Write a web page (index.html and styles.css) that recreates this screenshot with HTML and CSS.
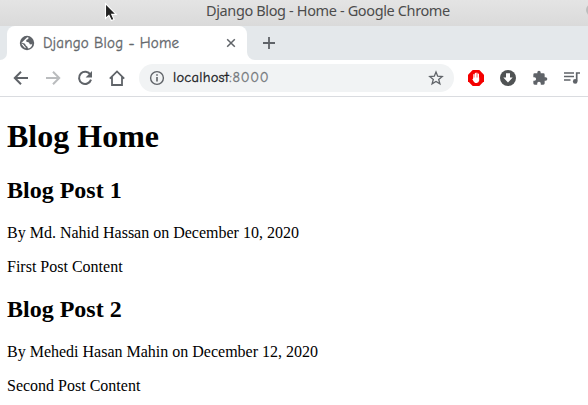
FILE: index.html
```html
<!DOCTYPE html>
<html lang="en">
<head>
<meta charset="utf-8">
<title>Django Blog - Home</title>
<link rel="stylesheet" href="styles.css">
</head>
<body>
<header class="titlebar"><span class="window-title">Django Blog - Home - Google Chrome</span><span class="window-button"></span></header>
<div class="tabstrip">
  <div class="tab-edge"></div>
  <div class="tab">
    <svg class="globe" width="16" height="16" viewBox="0 0 16 16"><circle cx="8" cy="8" r="7.2" fill="#5f6368"/><path d="M8.2 2.2 9.6 2.6 9.2 4 7.2 5 7.4 6.8 10 7.4 10.8 9.2 12.4 9.6 13.3 8.6 12.8 11 11 13 9 13.4 8.4 11.7 6.8 10.5 6 8.8 2.6 7.6 2.8 9.4 5.4 12.6 6.8 13.2 6.5 11.9 5.2 10.8 4.9 9.9 2.3 8Z" fill="#fff"/></svg>
    <span class="tab-title">Django Blog - Home</span>
    <svg class="close" width="10" height="10" viewBox="0 0 10 10"><path d="m1.2 1.2 7.6 7.6m0-7.6-7.6 7.6" fill="none" stroke="#5f6368" stroke-width="1.5"/></svg>
  </div>
  <div class="strip-rest"><svg width="12" height="12" viewBox="0 0 12 12"><path d="M6 0v12M0 6h12" stroke="#5f6368" stroke-width="1.8"/></svg></div>
</div>
<nav class="toolbar">
  <svg class="nav-icon" width="16" height="16" viewBox="0 0 16 16"><path d="M15 8H2.5M8 1.8 1.8 8 8 14.2" fill="none" stroke="#5f6368" stroke-width="2"/></svg>
  <svg class="nav-icon" width="16" height="16" viewBox="0 0 16 16"><path d="M1 8h12.5M8 1.8 14.2 8 8 14.2" fill="none" stroke="#babcbe" stroke-width="2"/></svg>
  <svg class="nav-icon" width="16" height="16" viewBox="0 0 16 16"><path d="M13.4 4.7A6.1 6.1 0 1 0 14 9.6" fill="none" stroke="#5f6368" stroke-width="2"/><path d="M15 1v6.4H8.6Z" fill="#5f6368"/></svg>
  <svg class="nav-icon" width="16" height="16" viewBox="0 0 16 16"><path d="M3 7v8h10V7M.8 8.6 8 1.4l7.2 7.2" fill="none" stroke="#5f6368" stroke-width="1.8"/></svg>
  <div class="omnibox">
    <svg width="16" height="16" viewBox="0 0 16 16"><circle cx="8" cy="8" r="6.4" fill="none" stroke="#5f6368" stroke-width="1.4"/><path d="M8 7v4.5M8 4.2v1.6" stroke="#5f6368" stroke-width="1.6"/></svg>
    <span class="url"><span class="host">localhost</span><span class="port">:8000</span></span>
    <svg class="star" width="16" height="16" viewBox="0 0 16 16"><path d="m8 2 1.7 4.2 4.5.3-3.5 2.9 1.2 4.4L8 11.4l-3.9 2.4 1.2-4.4-3.5-2.9 4.5-.3Z" fill="none" stroke="#5f6368" stroke-width="1.3"/></svg>
  </div>
  <div class="extensions">
    <svg width="16" height="16" viewBox="0 0 16 16"><path d="M4.7 0h6.6L16 4.7v6.6L11.3 16H4.7L0 11.3V4.7Z" fill="#f40000"/><path d="M5.9 8.5V4.6M7.4 7.5V3.3M8.9 7.5V3.1M10.4 9V4.2" stroke="#fff" stroke-width="1.2" stroke-linecap="round"/><path d="M5.4 7.4h5.8v3.1Q10.7 12.8 8.7 13H7.3Q5.8 12.2 4.3 9.2l.9-.5Z" fill="#fff"/></svg>
    <svg width="16" height="16" viewBox="0 0 16 16"><circle cx="8" cy="8" r="8" fill="#505354"/><path d="M6 3.3h4v4.2h2.7L8 12.4 3.3 7.5H6Z" fill="#fff"/></svg>
    <svg width="16" height="16" viewBox="0 0 24 24"><path d="M20.5 11H19V7a2 2 0 0 0-2-2h-4V3.5a2.5 2.5 0 0 0-5 0V5H4a2 2 0 0 0-2 2v3.8h1.5a2.7 2.7 0 0 1 0 5.4H2V20a2 2 0 0 0 2 2h3.8v-1.5a2.7 2.7 0 0 1 5.4 0V22H17a2 2 0 0 0 2-2v-4h1.5a2.5 2.5 0 0 0 0-5Z" fill="#5f6368"/></svg>
    <svg width="16" height="16" viewBox="0 0 16 16"><path d="M0 3h10M0 6.5h10M0 10h6.5M12.7 11V3h3.3" fill="none" stroke="#5f6368" stroke-width="1.7"/><circle cx="11.2" cy="11.4" r="2.3" fill="#5f6368"/></svg>
  </div>
</nav>
<main class="page">
  <h1>Blog Home</h1>
  <article><h2>Blog Post 1</h2><p>By Md. Nahid Hassan on December 10, 2020</p><p>First Post Content</p></article>
  <article><h2>Blog Post 2</h2><p>By Mehedi Hasan Mahin on December 12, 2020</p><p>Second Post Content</p></article>
</main>
<svg class="pointer" width="14" height="21" viewBox="0 0 14 21"><path d="M1.5 1.5v15l3.4-3.1 2.4 5.2 2.7-1.2-2.3-5h4.5Z" fill="#222" stroke="#fff" stroke-width="1.1"/></svg>
</body>
</html>
```
FILE: styles.css
```css
* { box-sizing: border-box; }
body { margin: 0; height: 405px; overflow: hidden; background: #fff; color: #000; font: 16px "Liberation Serif", serif; }
svg { display: block; flex: none; }
.titlebar { height: 26px; display: flex; justify-content: flex-end; align-items: center; padding-bottom: 6px; background: linear-gradient(#e4e4e4, #dadada); overflow: hidden; color: #4c4c4c; font: 14.5px/20px "Noto Sans", sans-serif; }
.window-title { flex: none; width: 382px; margin-right: -2px; white-space: nowrap; letter-spacing: -.37px; }
.window-button { width: 12px; height: 12px; margin-right: -10px; flex: none; border-radius: 50%; background: #bcbcbc; }
.tabstrip { height: 34px; display: flex; background: #fff; }
.tab-edge { width: 7px; background: #e4e8eb; border-bottom-right-radius: 7px; }
.tab { width: 240px; display: flex; align-items: center; padding: 0 11px 0 12px; background: linear-gradient(#e4e8eb 50%, #fff 50%); position: relative; z-index: 0; }
.tab::before { content: ""; position: absolute; inset: 0; z-index: -1; background: #fff; border-radius: 8px 8px 0 0; }
.tab-title { margin-left: 8px; white-space: nowrap; letter-spacing: .17px; color: #64686c; -webkit-text-stroke: .3px; font: 15px/20px "Comic Neue", "Noto Sans", sans-serif; }
.close { margin-left: auto; }
.strip-rest { flex: 1; display: flex; align-items: center; padding-left: 16px; background: #e4e8eb; border-bottom-left-radius: 8px; }
.toolbar { height: 37px; display: flex; align-items: center; padding: 0 8px 0 13px; border-bottom: 1px solid #dadce0; }
.nav-icon { margin-right: 16px; }
.nav-icon:nth-of-type(4) { margin-right: 14px; }
.omnibox { width: 315px; height: 28px; display: flex; align-items: center; padding: 0 10px; border-radius: 14px; background: #f1f3f4; }
.url { margin-left: 8px; font: 14.5px/20px "Comic Neue", "Noto Sans", sans-serif; -webkit-text-stroke: .3px; white-space: nowrap; }
.host { color: #202124; letter-spacing: .25px; }
.port { color: #74787c; letter-spacing: .7px; }
.star { margin-left: auto; }
.extensions { display: flex; gap: 16px; margin-left: 14px; }
.page { padding: 0 7px; display: flow-root; }
h1 { margin: 21.44px 0; font-size: 32px; }
h2 { margin: 19.92px 0; font-size: 24px; }
p { margin: 16px 0; }
.pointer { position: absolute; left: 104px; top: 2px; }
```
